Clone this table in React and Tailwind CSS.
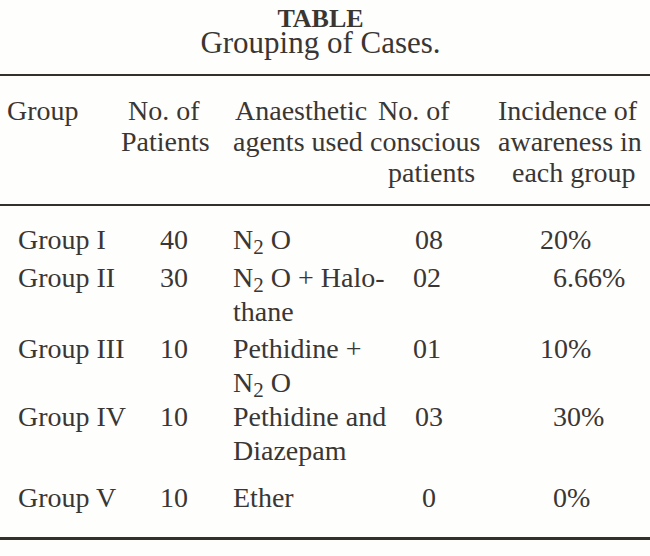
const rows = [
  { group: "Group I", n: "40", agents: [<>N<sub>2</sub> O</>], conscious: "08", cpad: "pl-[50px]", pct: "20%", ppad: "pl-[45px]", gap: "mt-[17px]" },
  { group: "Group II", n: "30", agents: [<>N<sub>2</sub> O + Halo-</>, "thane"], conscious: "02", cpad: "pl-[48px]", pct: "6.66%", ppad: "pl-[58px]", gap: "mt-[4px]" },
  { group: "Group III", n: "10", agents: ["Pethidine +", <>N<sub>2</sub> O</>], conscious: "01", cpad: "pl-[48px]", pct: "10%", ppad: "pl-[45px]", gap: "mt-[3px]" },
  { group: "Group IV", n: "10", agents: ["Pethidine and", "Diazepam"], conscious: "03", cpad: "pl-[50px]", pct: "30%", ppad: "pl-[58px]", gap: "mt-0" },
  { group: "Group V", n: "10", agents: ["Ether"], conscious: "0", cpad: "pl-[57px]", pct: "0%", ppad: "pl-[58px]", gap: "mt-[13px]" },
];

function Row({ row }) {
  return (
    <div className={`grid grid-cols-[115px_118px_132px_130px_155px] leading-[34px] ${row.gap}`}>
      <div className="pl-[18px] whitespace-nowrap">{row.group}</div>
      <div className="pl-[45px]">{row.n}</div>
      <div className="whitespace-nowrap">
        {row.agents.map((a, i) => (
          <div key={i}>{a}</div>
        ))}
      </div>
      <div className={row.cpad}>{row.conscious}</div>
      <div className={row.ppad}>{row.pct}</div>
    </div>
  );
}

export default function App() {
  return (
    <div
      className="w-[650px] h-[556px] bg-[#fefefd] text-[#3a3633] pt-[7px] overflow-hidden"
      style={{ fontFamily: '"Liberation Serif", "Times New Roman", serif' }}
    >
      <div className="text-center pr-[9px]">
        <div className="text-[26px] font-bold leading-[23px]">TABLE</div>
        <div className="text-[31px] leading-[26px]">Grouping of Cases.</div>
      </div>

      <div className="mt-[18px] h-[2px] bg-[#34302c]" />

      <div className="mt-[19px] grid grid-cols-[115px_118px_132px_130px_155px] text-[28px] leading-[31px] whitespace-nowrap">
        <div className="pl-[7px]">Group</div>
        <div>
          <div className="pl-[13px]">No. of</div>
          <div className="pl-[6px]">Patients</div>
        </div>
        <div>
          <div className="pl-[2px]">Anaesthetic</div>
          <div>agents used</div>
        </div>
        <div>
          <div className="pl-[13px]">No. of</div>
          <div className="pl-[5px]">conscious</div>
          <div className="pl-[23px]">patients</div>
        </div>
        <div>
          <div className="pl-[3px]">Incidence of</div>
          <div className="pl-[3px]">awareness in</div>
          <div className="pl-[17px]">each group</div>
        </div>
      </div>

      <div className="mt-[16px] h-[2px] bg-[#34302c]" />

      <div className="text-[28px]">
        {rows.map((r) => (
          <Row key={r.group} row={r} />
        ))}
      </div>

      <div className="mt-[22px] h-[3px] bg-[#34302c]" />
    </div>
  );
}
